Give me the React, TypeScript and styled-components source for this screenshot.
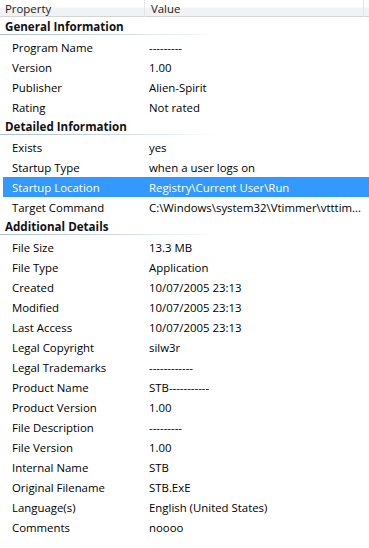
import React from "react";
import styled, { createGlobalStyle } from "styled-components";

const Global = createGlobalStyle`
  html, body { margin: 0; padding: 0; background: #fff; }
  body { font-family: "Open Sans", "Noto Sans", sans-serif; font-size: 11.4px; color: #000; }
`;

const Wrap = styled.div`
  width: 369px;
  height: 548px;
  background: #fff;
  overflow: hidden;
`;

const Header = styled.div`
  display: grid;
  grid-template-columns: 145px 219px 5px;
  height: 16px;
  border-bottom: 1px solid #d5d5d5;
  background: linear-gradient(#ffffff, #ffffff 45%, #f1f2f4 50%, #f1f2f4);
`;

const HeadCell = styled.div<{ $pad: number; $divider?: boolean }>`
  padding-left: ${(p) => p.$pad}px;
  line-height: 17px;
  font-size: 11.4px;
  color: #1a1a1a;
  border-right: ${(p) => (p.$divider ? "1px solid #e3e4e6" : "none")};
`;

const GroupRow = styled.div`
  height: 20px;
  position: relative;
  padding-left: 5px;
  font-weight: 700;
  font-size: 11.6px;
  line-height: 20px;
  color: #111;
  &::after {
    content: "";
    position: absolute;
    left: 0;
    bottom: 2px;
    width: 220px;
    height: 1px;
    background: linear-gradient(to right, #a9bfd1, #cad8e3 50%, rgba(255,255,255,0));
  }
`;

const ItemRow = styled.div<{ $selected?: boolean }>`
  display: grid;
  grid-template-columns: 149px 1fr;
  height: 19px;
  padding-top: 1px;
  line-height: 19px;
  margin-left: 3px;
  background: ${(p) => (p.$selected ? "#3399ff" : "transparent")};
  color: ${(p) => (p.$selected ? "#fff" : "#000")};
`;

const Label = styled.div`
  padding-left: 9px;
  white-space: nowrap;
  overflow: hidden;
`;

const Value = styled.div`
  margin-left: -3px;
  white-space: nowrap;
`;

type Item = { k: string; v: string; sel?: boolean };
type Group = { title: string; items: Item[] };

const groups: Group[] = [
  {
    title: "General Information",
    items: [
      { k: "Program Name", v: "---------" },
      { k: "Version", v: "1.00" },
      { k: "Publisher", v: "Alien-Spirit" },
      { k: "Rating", v: "Not rated" },
    ],
  },
  {
    title: "Detailed Information",
    items: [
      { k: "Exists", v: "yes" },
      { k: "Startup Type", v: "when a user logs on" },
      { k: "Startup Location", v: "Registry\\Current User\\Run", sel: true },
      { k: "Target Command", v: "C:\\Windows\\system32\\Vtimmer\\vtttim..." },
    ],
  },
  {
    title: "Additional Details",
    items: [
      { k: "File Size", v: "13.3 MB" },
      { k: "File Type", v: "Application" },
      { k: "Created", v: "10/07/2005 23:13" },
      { k: "Modified", v: "10/07/2005 23:13" },
      { k: "Last Access", v: "10/07/2005 23:13" },
      { k: "Legal Copyright", v: "silw3r" },
      { k: "Legal Trademarks", v: "------------" },
      { k: "Product Name", v: "STB-----------" },
      { k: "Product Version", v: "1.00" },
      { k: "File Description", v: "---------" },
      { k: "File Version", v: "1.00" },
      { k: "Internal Name", v: "STB" },
      { k: "Original Filename", v: "STB.ExE" },
      { k: "Language(s)", v: "English (United States)" },
      { k: "Comments", v: "noooo" },
    ],
  },
];

export default function App() {
  return (
    <Wrap>
      <Global />
      <Header>
        <HeadCell $pad={5} $divider>Property</HeadCell>
        <HeadCell $pad={6} $divider>Value</HeadCell>
        <HeadCell $pad={0} />
      </Header>
      {groups.map((g) => (
        <React.Fragment key={g.title}>
          <GroupRow>{g.title}</GroupRow>
          {g.items.map((it) => (
            <ItemRow key={it.k} $selected={it.sel}>
              <Label>{it.k}</Label>
              <Value>{it.v}</Value>
            </ItemRow>
          ))}
        </React.Fragment>
      ))}
    </Wrap>
  );
}
